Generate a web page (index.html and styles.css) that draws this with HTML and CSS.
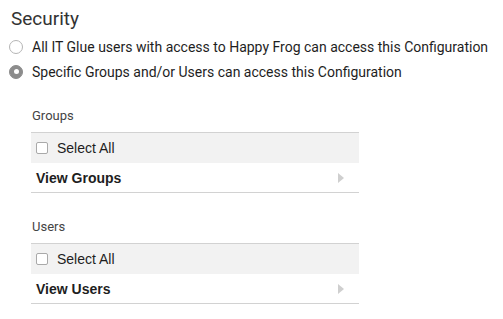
FILE: index.html
```html
<!DOCTYPE html>
<html lang="en">

<head>
    <meta charset="UTF-8">
    <meta name="viewport" content="width=device-width, initial-scale=1.0">
    <title>Security</title>
    <link rel="stylesheet" href="styles.css">
</head>

<body>
    <div class="security">
        <h2 class="titulo">Security</h2>

        <!-- Opções de acesso -->
        <label class="opcao">
            <span class="radio"></span>
            All IT Glue users with access to Happy Frog can access this Configuration
        </label>
        <label class="opcao">
            <span class="radio marcado"></span>
            Specific Groups and/or Users can access this Configuration
        </label>

        <!-- Grupos -->
        <div class="bloco">
            <p class="bloco-titulo">Groups</p>
            <div class="lista">
                <div class="linha-todos">
                    <span class="checkbox"></span>
                    Select All
                </div>
                <div class="linha-ver">
                    <span>View Groups</span>
                    <span class="seta"></span>
                </div>
            </div>
        </div>

        <!-- Usuários -->
        <div class="bloco">
            <p class="bloco-titulo">Users</p>
            <div class="lista">
                <div class="linha-todos">
                    <span class="checkbox"></span>
                    Select All
                </div>
                <div class="linha-ver">
                    <span>View Users</span>
                    <span class="seta"></span>
                </div>
            </div>
        </div>
    </div>
</body>

</html>
```

FILE: styles.css
```css
/* Configuração geral */
body {
    margin: 0;
    padding: 0;
    font-family: 'Roboto', sans-serif;
    background: #fff;
    color: #333;
}

.security {
    padding: 6px 0 0 9px;
}

.titulo {
    margin: 0 0 2px 2px;
    font-size: 19px;
    font-weight: 400;
    line-height: 26px;
    color: #333;
}

/* Radios */
.opcao {
    display: flex;
    align-items: center;
    gap: 9px;
    height: 25px;
    font-size: 14px;
    color: #1e1e1e;
}

.radio {
    width: 12px;
    height: 12px;
    border: 1px solid #b5b5b5;
    border-radius: 50%;
    background: #fff;
    display: flex;
    align-items: center;
    justify-content: center;
}

.radio.marcado {
    background: #8c8c8c;
    border-color: #8c8c8c;
}

.radio.marcado::after {
    content: "";
    width: 5px;
    height: 5px;
    border-radius: 50%;
    background: #fff;
}

/* Blocos de grupos e usuários */
.bloco {
    margin-left: 22px;
    width: 328px;
    margin-top: 24px;
}

.bloco + .bloco {
    margin-top: 26px;
}

.bloco-titulo {
    margin: 0 0 9px 1px;
    font-size: 13px;
    line-height: 15px;
    color: #444;
}

.lista {
    border-top: 1px solid #d2d2d2;
    border-bottom: 1px solid #d2d2d2;
    font-family: 'Liberation Sans', Arial, sans-serif;
    font-size: 14px;
}

.linha-todos {
    display: flex;
    align-items: center;
    gap: 9px;
    height: 30px;
    padding-left: 5px;
    background: #f2f2f2;
    color: #1e1e1e;
}

.checkbox {
    width: 10px;
    height: 10px;
    border: 1px solid #a9a9a9;
    border-radius: 2px;
    background: #fff;
}

.linha-ver {
    display: flex;
    align-items: center;
    justify-content: space-between;
    height: 29px;
    padding: 0 15px 0 5px;
    font-weight: bold;
    color: #1e1e1e;
}

.seta {
    width: 0;
    height: 0;
    border-top: 5px solid transparent;
    border-bottom: 5px solid transparent;
    border-left: 6px solid #cfcfcf;
}
```
